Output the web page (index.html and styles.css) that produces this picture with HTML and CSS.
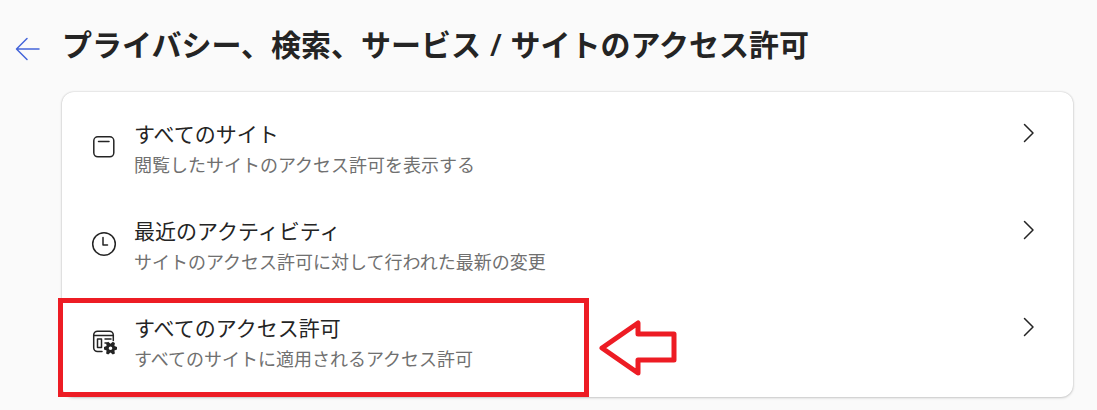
FILE: index.html
```html
<!DOCTYPE html>
<html lang="ja">
<head>
    <meta charset="UTF-8">
    <meta name="viewport" content="width=device-width, initial-scale=1.0">
    <title>サイトのアクセス許可</title>
    <link rel="stylesheet" href="styles.css">
</head>
<body>
    <header class="page-header">
        <button class="back-btn" type="button" aria-label="戻る">
            <svg width="26" height="24" viewBox="0 0 26 24">
                <path d="M25 12H3M13 1.500L2.500 12l10.500 10.500"/>
            </svg>
        </button>
        <h1>プライバシー、検索、サービス<span class="separator"> / </span>サイトのアクセス許可</h1>
    </header>

    <main class="card">
        <button class="row" type="button">
            <svg class="icon" width="26" height="26" viewBox="0 0 26 26">
                <rect x="2.800" y="2.800" width="20" height="20" rx="4"/>
                <path d="M7.500 7.500h10.500"/>
            </svg>
            <span class="row-text">
                <span class="row-title">すべてのサイト</span>
                <span class="row-desc">閲覧したサイトのアクセス許可を表示する</span>
            </span>
            <svg class="chevron" width="12" height="20" viewBox="0 0 12 20">
                <path d="M1.500 1.500L10 10l-8.500 8.500"/>
            </svg>
        </button>

        <button class="row" type="button">
            <svg class="icon" width="26" height="26" viewBox="0 0 26 26">
                <circle cx="13" cy="13" r="11.300"/>
                <path d="M12 6.500v7.500h4.500"/>
            </svg>
            <span class="row-text">
                <span class="row-title">最近のアクティビティ</span>
                <span class="row-desc">サイトのアクセス許可に対して行われた最新の変更</span>
            </span>
            <svg class="chevron" width="12" height="20" viewBox="0 0 12 20">
                <path d="M1.500 1.500L10 10l-8.500 8.500"/>
            </svg>
        </button>

        <button class="row" type="button">
            <svg class="icon" width="26" height="26" viewBox="0 0 26 26">
                <path d="M11 23.500H6.500a3.800 3.800 0 0 1-3.800-3.800V7a3.800 3.800 0 0 1 3.800-3.800h12a3.800 3.800 0 0 1 3.800 3.800v5.500M2.700 7.500h19.600"/>
                <rect x="6.500" y="11" width="4" height="8.500"/>
                <path d="M14 11h6M14 15h1.500"/>
                <path class="gear" fill-rule="evenodd" d="M17.200 13.800l2.300 2 2.300-2 2.100 1.200-.5 3 2.600 1v2.400l-2.600 1 .5 3-2.100 1.200-2.300-2-2.300 2-2.100-1.200.5-3-2.600-1v-2.400l2.600-1-.5-3zM19.500 18.400a1.800 1.800 0 1 0 0 3.600 1.800 1.800 0 0 0 0-3.600z"/>
            </svg>
            <span class="row-text">
                <span class="row-title">すべてのアクセス許可</span>
                <span class="row-desc">すべてのサイトに適用されるアクセス許可</span>
            </span>
            <svg class="chevron" width="12" height="20" viewBox="0 0 12 20">
                <path d="M1.500 1.500L10 10l-8.500 8.500"/>
            </svg>
            <!-- Callout over the row -->
            <span class="highlight"></span>
            <svg class="arrow" width="78" height="56" viewBox="0 0 78 56">
                <path d="M3 28L39 3v11h36v26H39v13z"/>
            </svg>
        </button>
    </main>
</body>
</html>
```

FILE: styles.css
```css
body {
    font-family: "Noto Sans CJK JP", sans-serif;
    background-color: #fafafa;
    color: #242424;
    margin: 0;
    padding: 22px 24px 12px 14px;
}
svg {
    fill: none;
    stroke: #242424;
    stroke-width: 1.5;
    stroke-linecap: round;
    stroke-linejoin: round;
    flex-shrink: 0;
    overflow: visible;
}
button {
    font-family: inherit;
    color: inherit;
    background: none;
    border: none;
    cursor: pointer;
}

/* Header */
.page-header {
    display: flex;
    align-items: flex-start;
    gap: 22px;
    margin-bottom: 26px;
}
.back-btn {
    display: flex;
    padding: 0;
    margin-top: 15px;
}
.back-btn svg {
    stroke: #4464d9;
}
h1 {
    margin: 0;
    font-size: 30px;
    line-height: 42px;
    font-weight: bold;
}
.separator {
    padding: 0 1px;
    font-family: "Open Sans", sans-serif;
    font-weight: 600;
}

/* Settings list */
.card {
    margin-left: 48px;
    padding: 7px 0;
    background-color: #fff;
    border-radius: 12px;
    box-shadow: 0 0 2px rgba(0, 0, 0, 0.2), 0 1px 3px rgba(0, 0, 0, 0.16);
}
.row {
    position: relative;
    display: flex;
    align-items: flex-start;
    width: 100%;
    padding: 20px 38px 17px 29px;
    text-align: left;
}
.icon {
    margin: 15px 17px 0 0;
}
.gear {
    fill: #242424;
    stroke: none;
}
.row-text {
    flex: 1;
}
.row-title,
.row-desc {
    display: block;
}
.row-title {
    margin-bottom: 2px;
    font-size: 21px;
    line-height: 28px;
}
.row-desc {
    font-size: 18px;
    line-height: 30px;
    color: #707070;
}
.chevron {
    margin-top: 4px;
}

/* Red callout */
.highlight {
    position: absolute;
    top: 5px;
    bottom: -7px;
    left: -4px;
    width: 521px;
    border: 5px solid #ed1c24;
}
.arrow {
    position: absolute;
    top: 27px;
    left: 537px;
    stroke: #ed1c24;
    stroke-width: 5;
}
```
